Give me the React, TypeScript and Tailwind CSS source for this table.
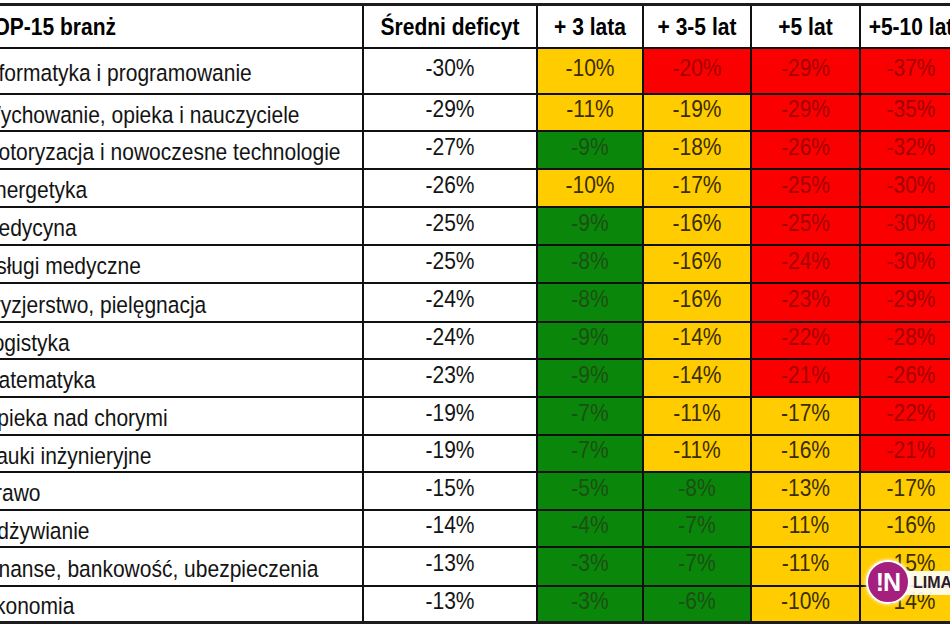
import React from 'react';

type Tone = 'Y' | 'R' | 'G';

interface Row {
  name: string;
  avg: string;
  cells: [string, Tone][];
}

const rows: Row[] = [
  { name: 'Informatyka i programowanie', avg: '-30%', cells: [['-10%', 'Y'], ['-20%', 'R'], ['-29%', 'R'], ['-37%', 'R']] },
  { name: 'Wychowanie, opieka i nauczyciele', avg: '-29%', cells: [['-11%', 'Y'], ['-19%', 'Y'], ['-29%', 'R'], ['-35%', 'R']] },
  { name: 'Motoryzacja i nowoczesne technologie', avg: '-27%', cells: [['-9%', 'G'], ['-18%', 'Y'], ['-26%', 'R'], ['-32%', 'R']] },
  { name: 'Energetyka', avg: '-26%', cells: [['-10%', 'Y'], ['-17%', 'Y'], ['-25%', 'R'], ['-30%', 'R']] },
  { name: 'Medycyna', avg: '-25%', cells: [['-9%', 'G'], ['-16%', 'Y'], ['-25%', 'R'], ['-30%', 'R']] },
  { name: 'Usługi medyczne', avg: '-25%', cells: [['-8%', 'G'], ['-16%', 'Y'], ['-24%', 'R'], ['-30%', 'R']] },
  { name: 'Fryzjerstwo, pielęgnacja', avg: '-24%', cells: [['-8%', 'G'], ['-16%', 'Y'], ['-23%', 'R'], ['-29%', 'R']] },
  { name: 'Logistyka', avg: '-24%', cells: [['-9%', 'G'], ['-14%', 'Y'], ['-22%', 'R'], ['-28%', 'R']] },
  { name: 'Matematyka', avg: '-23%', cells: [['-9%', 'G'], ['-14%', 'Y'], ['-21%', 'R'], ['-26%', 'R']] },
  { name: 'Opieka nad chorymi', avg: '-19%', cells: [['-7%', 'G'], ['-11%', 'Y'], ['-17%', 'Y'], ['-22%', 'R']] },
  { name: 'Nauki inżynieryjne', avg: '-19%', cells: [['-7%', 'G'], ['-11%', 'Y'], ['-16%', 'Y'], ['-21%', 'R']] },
  { name: 'Prawo', avg: '-15%', cells: [['-5%', 'G'], ['-8%', 'G'], ['-13%', 'Y'], ['-17%', 'Y']] },
  { name: 'Odżywianie', avg: '-14%', cells: [['-4%', 'G'], ['-7%', 'G'], ['-11%', 'Y'], ['-16%', 'Y']] },
  { name: 'Finanse, bankowość, ubezpieczenia', avg: '-13%', cells: [['-3%', 'G'], ['-7%', 'G'], ['-11%', 'Y'], ['-15%', 'Y']] },
  { name: 'Ekonomia', avg: '-13%', cells: [['-3%', 'G'], ['-6%', 'G'], ['-10%', 'Y'], ['-14%', 'Y']] },
];

const toneClass: Record<Tone, string> = {
  Y: 'bg-[#ffcc00] text-[#3a2e00]',
  R: 'bg-[#fb0000] text-[#a30000]',
  G: 'bg-[#0a870a] text-[#1c4f15]',
};

const headers = ['Średni deficyt', '+ 3 lata', '+ 3-5 lat', '+5 lat', '+5-10 lat'];

export default function App() {
  return (
    <div className="relative h-[632px] w-[950px] overflow-hidden bg-white pt-[3px] font-['Liberation_Sans',Arial,sans-serif] text-[21px] leading-none text-[#141414]">
      <div className="ml-[-24px] w-[1010px] border-y-[3px] border-[#1c1c1c]">
        <div className="grid grid-cols-[386px_172px_104px_106px_107px_100px] grid-rows-[41px_44px_35px_36px_36px_36px_36px_37px_35px_36px_36px_35px_36px_35px_37px_34px] gap-[2px] bg-[#111]">
          {/* header */}
          <div className="flex items-center bg-white pl-[5px] font-bold text-black">
            <span className="inline-block scale-y-115">TOP-15 branż</span>
          </div>
          {headers.map((h) => (
            <div key={h} className="flex items-center justify-center whitespace-nowrap bg-white font-bold text-black">
              <span className="inline-block scale-y-115">{h}</span>
            </div>
          ))}

          {rows.map((r) => (
            <React.Fragment key={r.name}>
              <div className="flex items-center whitespace-nowrap bg-white pl-[5px] pt-[3px]">
                <span className="inline-block scale-y-115">{r.name}</span>
              </div>
              <div className="flex items-center justify-center bg-white pb-[8px]">
                <span className="inline-block scale-y-115">{r.avg}</span>
              </div>
              {r.cells.map(([v, t], i) => (
                <div key={i} className={`flex items-center justify-center pb-[8px] ${toneClass[t]}`}>
                  <span className="inline-block scale-y-115">{v}</span>
                </div>
              ))}
            </React.Fragment>
          ))}
        </div>
      </div>

      {/* watermark */}
      <div className="absolute left-[898px] top-[571px] flex h-[24px] w-[60px] items-center rounded-[3px] bg-white/90 pl-[15px]">
        <span className="text-[16px] font-bold text-[#2a1a2a]">LIMA</span>
      </div>
      <div className="absolute left-[866px] top-[560px] flex h-[44px] w-[44px] items-center justify-center rounded-full border-2 border-white bg-[#a5207e] shadow-[0_0_4px_rgba(255,255,255,0.9)]">
        <span className="text-[25px] font-bold tracking-[-1px] text-white">!N</span>
      </div>
    </div>
  );
}
